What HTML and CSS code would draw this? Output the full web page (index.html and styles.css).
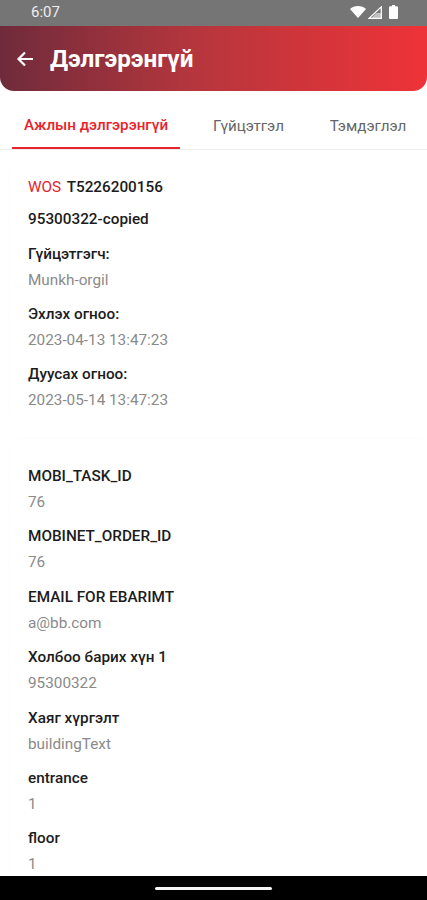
FILE: index.html
```html
<!DOCTYPE html>
<html lang="en">
<head>
    <meta charset="UTF-8">
    <meta name="viewport" content="width=device-width, initial-scale=1.0">
    <title>Дэлгэрэнгүй</title>
    <link rel="stylesheet" href="styles.css">
</head>
<body>
    <div class="status-bar">
        <span class="status-time">6:07</span>
        <div class="status-icons">
            <svg class="icon-wifi" width="16" height="12" viewBox="0 0 16 12"><path d="M0 3C2 1.200 4.900 0 8 0s6 1.200 8 3L8 12z" fill="#fff"/></svg>
            <svg class="icon-signal" width="14" height="13" viewBox="0 0 14 13"><path d="M13.300.9v11.500H1z" fill="none" stroke="#fff" stroke-width="1.300"/><path d="M8 7h5v5.500H3z" fill="#fff" opacity=".55"/></svg>
            <svg width="9" height="14" viewBox="0 0 9 14"><path d="M3 0h3v1.200h1.600c.8 0 1.400.6 1.400 1.300v10.200c0 .7-.6 1.300-1.400 1.300H1.400C.6 14 0 13.400 0 12.700V2.500c0-.7.6-1.300 1.400-1.300H3z" fill="#fff"/></svg>
        </div>
    </div>

    <header class="app-bar">
        <svg class="back-icon" width="18" height="18" viewBox="0 0 18 18"><path d="M17 9H3M9 2.500 2.500 9 9 15.500" fill="none" stroke="#fff" stroke-width="2.200"/></svg>
        <h1>Дэлгэрэнгүй</h1>
    </header>

    <nav class="tabs">
        <div class="tab active">Ажлын дэлгэрэнгүй</div>
        <div class="tab tab-second">Гүйцэтгэл</div>
        <div class="tab tab-third">Тэмдэглэл</div>
    </nav>

    <main class="content">
        <!-- Work summary -->
        <section class="card">
            <p class="title-row"><span class="red">WOS</span> T5226200156</p>
            <p class="title-row title-last">95300322-copied</p>
            <div class="field"><div class="label">Гүйцэтгэгч:</div><div class="value">Munkh-orgil</div></div>
            <div class="field"><div class="label">Эхлэх огноо:</div><div class="value">2023-04-13 13:47:23</div></div>
            <div class="field"><div class="label">Дуусах огноо:</div><div class="value">2023-05-14 13:47:23</div></div>
        </section>

        <!-- Extra attributes -->
        <section class="card card-second">
            <div class="field"><div class="label">MOBI_TASK_ID</div><div class="value">76</div></div>
            <div class="field"><div class="label">MOBINET_ORDER_ID</div><div class="value">76</div></div>
            <div class="field"><div class="label">EMAIL FOR EBARIMT</div><div class="value">a@bb.com</div></div>
            <div class="field"><div class="label">Холбоо барих хүн 1</div><div class="value">95300322</div></div>
            <div class="field"><div class="label">Хаяг хүргэлт</div><div class="value">buildingText</div></div>
            <div class="field"><div class="label">entrance</div><div class="value">1</div></div>
            <div class="field"><div class="label">floor</div><div class="value">1</div></div>
        </section>
    </main>

    <div class="nav-bar"><div class="home-handle"></div></div>
</body>
</html>
```

FILE: styles.css
```css
html, body {
    margin: 0;
    padding: 0;
}

body {
    width: 427px;
    height: 900px;
    display: flex;
    flex-direction: column;
    overflow: hidden;
    background: #fff;
    font-family: Roboto, "Noto Sans", sans-serif;
    color: #1c1c1c;
}

.status-bar {
    height: 26px;
    flex: none;
    display: flex;
    align-items: center;
    justify-content: space-between;
    padding: 0 29px 2px 31px;
    box-sizing: border-box;
    background: #757575;
    color: #eee;
    font-size: 15px;
}

.status-icons {
    display: flex;
    align-items: center;
}

.icon-wifi {
    margin-right: 2px;
}

.icon-signal {
    margin-right: 7px;
}

.app-bar {
    height: 65px;
    flex: none;
    display: flex;
    align-items: center;
    gap: 16px;
    padding: 0 16px;
    box-sizing: border-box;
    background: linear-gradient(90deg, #6f2b3b, #b5363d 45%, #ee3338);
    border-radius: 0 0 14px 14px;
}

.app-bar h1 {
    margin: 0;
    color: #fff;
    font-size: 24.300px;
    font-weight: 700;
}

.back-icon {
    flex: none;
}

.tabs {
    height: 58px;
    flex: none;
    display: flex;
    margin-top: 1px;
    padding-left: 12px;
    border-bottom: 1px solid #eee;
    box-sizing: border-box;
    font-size: 15.200px;
    color: #666;
    white-space: nowrap;
}

.tab {
    display: flex;
    align-items: center;
    justify-content: center;
    height: 57px;
    padding-top: 10px;
    box-sizing: border-box;
}

.tab.active {
    width: 168px;
    color: #e8232b;
    font-weight: 500;
    border-bottom: 2px solid #e8232b;
}

.tab-second {
    width: 137px;
}

.tab-third {
    width: 102px;
}

.content {
    flex: 1;
    min-height: 0;
    overflow: hidden;
}

.card {
    margin: 14px 0 0 10px;
    padding: 15px 18px 9px;
    background: #fff;
    border-radius: 8px 0 0 8px;
    box-shadow: 0 0 4px rgba(0, 0, 0, 0.02);
    font-size: 15.300px;
}

.card-second {
    margin-top: 21px;
    padding-top: 29px;
}

.card-second .field {
    margin-bottom: 17.400px;
}

.title-row {
    margin: 0 0 15px;
    line-height: 17px;
    font-weight: 500;
}

.title-last {
    margin-bottom: 18px;
}

.red {
    color: #e8232b;
    font-weight: 400;
    margin-right: 2px;
}

.field {
    margin-bottom: 17px;
}

.field:last-child {
    margin-bottom: 0;
}

.label {
    line-height: 17px;
    margin-bottom: 9px;
    font-weight: 500;
}

.value {
    line-height: 17px;
    color: #8a8a8a;
}

.nav-bar {
    height: 24px;
    flex: none;
    display: flex;
    align-items: center;
    justify-content: center;
    background: #000;
}

.home-handle {
    width: 117px;
    height: 3px;
    border-radius: 2px;
    background: #f5f5f5;
}
```
